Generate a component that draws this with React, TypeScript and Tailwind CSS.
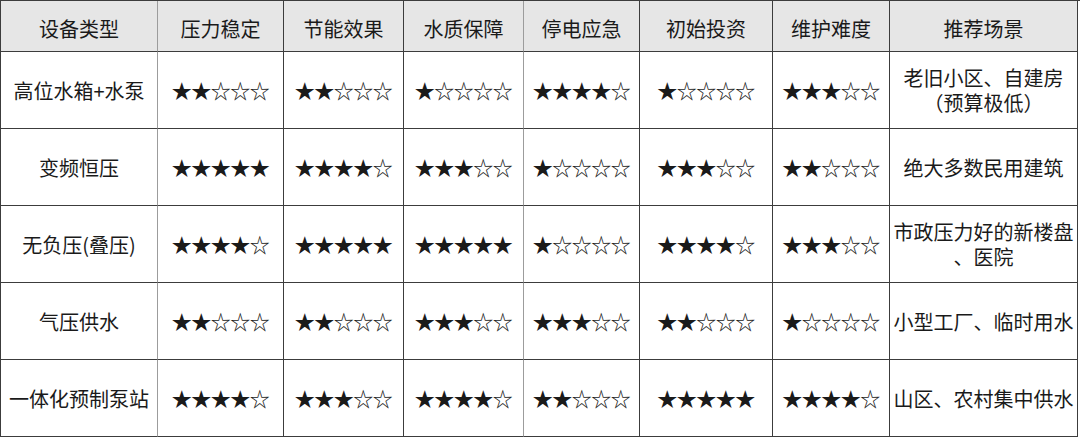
import React from 'react'

const headers = ['设备类型', '压力稳定', '节能效果', '水质保障', '停电应急', '初始投资', '维护难度', '推荐场景']
const widths = [157, 126, 120, 120, 116, 133, 117, 189]
// columns whose left edge is drawn in a lighter grey
const greyLeft = [1, 4]

const rows: { name: string; stars: number[]; scene: React.ReactNode }[] = [
  { name: '高位水箱+水泵', stars: [2, 2, 1, 4, 1, 3], scene: <>老旧小区、自建房<br />（预算极低）</> },
  { name: '变频恒压', stars: [5, 4, 3, 1, 3, 2], scene: '绝大多数民用建筑' },
  { name: '无负压(叠压)', stars: [4, 5, 5, 1, 4, 3], scene: <>市政压力好的新楼盘<br />、医院</> },
  { name: '气压供水', stars: [2, 2, 3, 3, 2, 1], scene: '小型工厂、临时用水' },
  { name: '一体化预制泵站', stars: [4, 3, 4, 2, 5, 4], scene: '山区、农村集中供水' },
]

const stars = (n: number) => '★'.repeat(n) + '☆'.repeat(5 - n)

function Cell({ col, children, head }: { col: number; children: React.ReactNode; head?: boolean }) {
  const left = greyLeft.includes(col) ? 'border-l-[#9c9c9c]' : 'border-l-[#3c3c3c]'
  return (
    <div
      className={`flex items-center justify-center text-center whitespace-nowrap border-l border-b border-b-[#3c3c3c] ${left} ${
        head ? 'bg-[#e6e6e6] pt-1' : 'bg-white'
      } ${col === 7 ? 'border-r border-r-[#3c3c3c]' : ''}`}
    >
      {children}
    </div>
  )
}

export default function App() {
  return (
    <div className="w-[1080px] h-[438px] bg-white text-[#1a1a1a] text-[20px] leading-[25px] font-['Noto_Sans_CJK_SC',sans-serif]">
      <div
        className="grid border-t border-t-[#3c3c3c]"
        style={{ gridTemplateColumns: widths.map(w => `${w}px`).join(' '), gridTemplateRows: '51px repeat(5, 77px)' }}
      >
        {headers.map((h, i) => (
          <Cell key={h} col={i} head>
            {h}
          </Cell>
        ))}
        {rows.map(r => (
          <React.Fragment key={r.name}>
            <Cell col={0}>{r.name}</Cell>
            {r.stars.map((s, i) => (
              <Cell key={i} col={i + 1}>
                <span className="tracking-[-0.5px]">{stars(s)}</span>
              </Cell>
            ))}
            <Cell col={7}>{r.scene}</Cell>
          </React.Fragment>
        ))}
      </div>
    </div>
  )
}
